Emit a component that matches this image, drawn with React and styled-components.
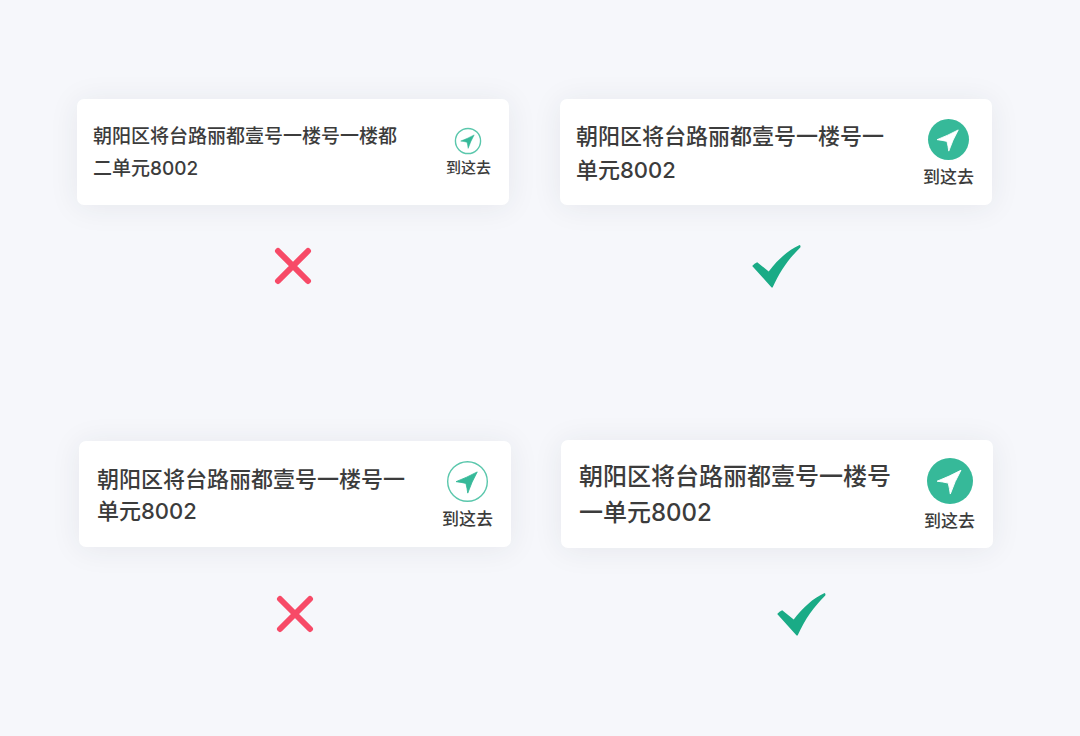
import styled, { createGlobalStyle } from "styled-components";

const GlobalStyle = createGlobalStyle`
  * {
    box-sizing: border-box;
  }

  body {
    margin: 0;
    background: #f6f7fb;
    color: #3c3c3c;
    font-family: Inter, "Noto Sans CJK SC", sans-serif;
  }
`;

const Page = styled.main`
  display: flex;
  flex-direction: column;
  gap: 152px;
  min-height: 100vh;
  padding: 99px 0 100px;
`;

const Comparison = styled.section`
  display: grid;
  grid-template-columns: 1fr 1fr;
  align-items: center;
  column-gap: ${(props) => props.$columnGap};
  row-gap: ${(props) => props.$rowGap};
  padding: ${(props) => props.$padding};
`;

const CardBox = styled.article`
  display: flex;
  align-items: center;
  gap: 32px;
  min-height: 106px;
  padding: 18px 18px 17px ${(props) => (props.$inset ? "18px" : "16px")};
  background: #fff;
  border-radius: 7px;
  box-shadow: 0 2px 30px rgba(40, 50, 70, 0.08);
`;

const Address = styled.p`
  flex: 1;
  margin: 0;
  font-size: ${(props) => props.$size};
  line-height: ${(props) => props.$lineHeight};
  font-weight: 500;
`;

const GoButton = styled.button`
  display: flex;
  flex-direction: column;
  align-items: center;
  gap: ${(props) => (props.$small ? "4px" : "7px")};
  padding: 0;
  border: none;
  background: transparent;
  color: inherit;
  font-family: inherit;
  font-size: ${(props) => (props.$small ? "15px" : "17px")};
  font-weight: 500;
  line-height: 20px;
  white-space: nowrap;
  cursor: pointer;
`;

const NavSvg = styled.svg`
  display: block;
  width: ${(props) => props.$size};
  height: ${(props) => props.$size};
  overflow: visible;
`;

const Mark = styled.div`
  display: flex;
  align-items: center;
  justify-content: center;
  height: 44px;
  padding-left: ${(props) => (props.$shifted ? "48px" : "0")};
`;

const NavIcon = ({ size, filled }) => (
  <NavSvg $size={size} viewBox="0 0 48 48" aria-hidden="true">
    {filled ? (
      <circle cx="24" cy="24" r="24" fill="#36b999" />
    ) : (
      <circle
        cx="24"
        cy="24"
        r="23.2"
        fill="none"
        stroke="#5ac7ac"
        strokeWidth="1.4"
        vectorEffect="non-scaling-stroke"
      />
    )}
    <path
      d="M35.4 12.8 Q29 24 24.3 37.6 Q23.6 32 22.2 26.2 Q16.4 24.8 10.6 24.2 Q23 19.4 35.4 12.8 Z"
      fill={filled ? "#fff" : "#36b999"}
      stroke={filled ? "#fff" : "#36b999"}
      strokeWidth="1"
      strokeLinejoin="round"
    />
  </NavSvg>
);

const CrossIcon = () => (
  <svg width="38" height="38" viewBox="0 0 38 38" role="img" aria-label="错误">
    <path
      d="M4 4 L34 34 M34 4 L4 34"
      fill="none"
      stroke="#f74a67"
      strokeWidth="6"
      strokeLinecap="round"
    />
  </svg>
);

const CheckIcon = () => (
  <svg width="50" height="44" viewBox="0 0 50 44" role="img" aria-label="正确">
    <path
      d="M1.2 22 Q3.4 19.2 6.2 18.2 L17.7 27.4 C26.5 16 37 6 48.6 0.9 Q50 1.6 49.3 3.4 C38 14.5 29 27 21.6 43.6 L20.6 43.4 Z"
      fill="#1aab86"
    />
  </svg>
);

const AddressCard = ({ text, size, lineHeight, iconSize, filled, small, inset }) => (
  <CardBox $inset={inset}>
    <Address $size={size} $lineHeight={lineHeight}>
      {text}
    </Address>
    <GoButton type="button" $small={small}>
      <NavIcon size={iconSize} filled={filled} />
      到这去
    </GoButton>
  </CardBox>
);

const App = () => {
  return (
    <>
      <GlobalStyle />
      <Page>
        <Comparison $columnGap="51px" $rowGap="39px" $padding="0 88px 0 77px">
          <AddressCard
            text="朝阳区将台路丽都壹号一楼号一楼都二单元8002"
            size="19px"
            lineHeight="32px"
            iconSize="26px"
            small
          />
          <AddressCard
            text="朝阳区将台路丽都壹号一楼号一单元8002"
            size="22px"
            lineHeight="34px"
            iconSize="41px"
            filled
          />
          <Mark>
            <CrossIcon />
          </Mark>
          <Mark>
            <CheckIcon />
          </Mark>
        </Comparison>

        <Comparison $columnGap="50px" $rowGap="44px" $padding="0 87px 0 79px">
          <AddressCard
            text="朝阳区将台路丽都壹号一楼号一单元8002"
            size="22px"
            lineHeight="32px"
            iconSize="41px"
            inset
          />
          <AddressCard
            text="朝阳区将台路丽都壹号一楼号一单元8002"
            size="24px"
            lineHeight="36px"
            iconSize="46px"
            filled
            inset
          />
          <Mark>
            <CrossIcon />
          </Mark>
          <Mark $shifted>
            <CheckIcon />
          </Mark>
        </Comparison>
      </Page>
    </>
  );
};

export default App;
